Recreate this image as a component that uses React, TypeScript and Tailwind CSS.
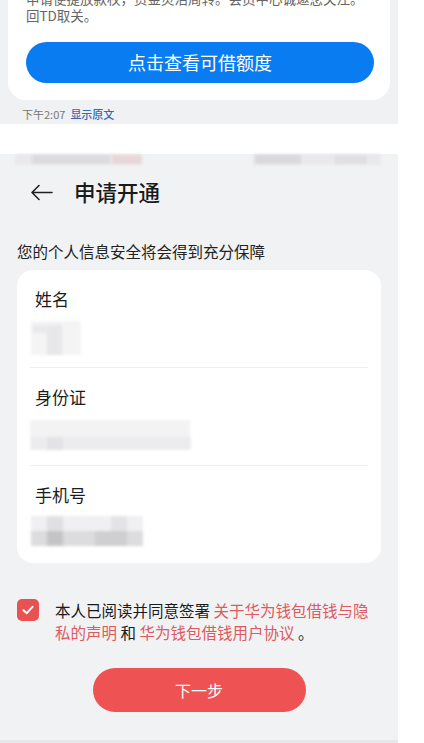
import React from "react";

function Mosaic({ blocks, className }: { blocks: { x: number; y: number; w: number; h: number; c: string }[]; className?: string }) {
  return (
    <div className={"relative " + (className ?? "")}>
      <div className="absolute inset-0 blur-[1.5px]">
        {blocks.map((b, i) => (
          <div
            key={i}
            className="absolute"
            style={{ left: b.x, top: b.y, width: b.w, height: b.h, background: b.c }}
          />
        ))}
      </div>
    </div>
  );
}

function Row({ label, mosaic, last }: { label: string; mosaic: React.ReactNode; last?: boolean }) {
  return (
    <div className="flex flex-col">
      <div className="pt-[17px] px-[18px] text-[17px] leading-[24px] text-[#1c1c1c]">{label}</div>
      <div className="h-[44px] relative">{mosaic}</div>
      <div className="h-[12px]" />
      {!last && <div className="mx-[13px] h-px bg-[#eeeff1]" />}
    </div>
  );
}

export default function App() {
  return (
    <div className="w-[424px] h-[743px] bg-white flex overflow-hidden font-['Noto_Sans_CJK_SC','Noto_Sans',sans-serif]">
      <div className="w-[398px] flex flex-col">
        {/* top chat screenshot */}
        <div className="h-[124px] bg-[#f0f1f3] px-[8px] flex flex-col">
          <div className="h-[100px] w-[382px] bg-white rounded-b-[18px] overflow-hidden flex flex-col">
            <div className="mt-[-10px] px-[18px] text-[13.5px] leading-[17px] text-[#666]">
              <div className="whitespace-nowrap">申请便捷放款权，资金灵活周转。会员中心诚邀您关注。</div>
              <div>回TD取关。</div>
            </div>
            <div className="mt-[18px] ml-[18px] mr-[16px] h-[41px] rounded-full bg-[#0a7cf2] flex items-center justify-center text-white text-[18px]">
              点击查看可借额度
            </div>
          </div>
          <div className="mt-[6px] ml-[14px] text-[11px] leading-[16px] flex gap-[5px]">
            <span className="text-[#777]">下午2:07</span>
            <span className="text-[#3a66b3] font-medium">显示原文</span>
          </div>
        </div>

        <div className="h-[30px] bg-white" />

        {/* application screen */}
        <div className="flex-1 bg-[#f1f2f4] flex flex-col">
          <Mosaic
            className="h-[12px]"
            blocks={[
              { x: 15, y: 0, w: 125, h: 11, c: "#e9e9eb" },
              { x: 32, y: 1, w: 78, h: 9, c: "#dcdcde" },
              { x: 112, y: 1, w: 30, h: 9, c: "#e8d6d8" },
              { x: 253, y: 0, w: 128, h: 11, c: "#e9e9eb" },
              { x: 255, y: 1, w: 46, h: 9, c: "#d9d9db" },
              { x: 335, y: 1, w: 32, h: 9, c: "#e0e0e2" },
            ]}
          />
          <div className="h-[52px] flex items-center">
            <svg className="ml-[30px]" width="23" height="17" viewBox="0 0 23 17" fill="none">
              <path d="M22 8.5H2 M9 1.5 L2 8.5 L9 15.5" stroke="#222" strokeWidth="1.6" strokeLinecap="round" strokeLinejoin="round" />
            </svg>
            <div className="ml-[21px] text-[21.5px] font-medium text-[#1a1a1a] leading-none">申请开通</div>
          </div>
          <div className="mt-[22px] px-[17px] text-[15.5px] leading-[22px] text-[#222]">您的个人信息安全将会得到充分保障</div>
          <div className="mt-[8px] mx-[17px] bg-white rounded-[16px] flex flex-col">
            <Row
              label="姓名"
              mosaic={
                <Mosaic
                  className="absolute inset-0"
                  blocks={[
                    { x: 14, y: 10, w: 50, h: 34, c: "#f4f4f5" },
                    { x: 30, y: 14, w: 15, h: 30, c: "#e7e7e9" },
                    { x: 15, y: 14, w: 16, h: 8, c: "#eaeaec" },
                  ]}
                />
              }
            />
            <Row
              label="身份证"
              mosaic={
                <Mosaic
                  className="absolute inset-0"
                  blocks={[
                    { x: 13, y: 11, w: 160, h: 30, c: "#f3f3f4" },
                    { x: 14, y: 28, w: 160, h: 13, c: "#ececee" },
                    { x: 30, y: 28, w: 16, h: 13, c: "#e3e3e5" },
                  ]}
                />
              }
            />
            <Row
              last
              label="手机号"
              mosaic={
                <Mosaic
                  className="absolute inset-0"
                  blocks={[
                    { x: 14, y: 9, w: 112, h: 15, c: "#f0f0f2" },
                    { x: 30, y: 9, w: 16, h: 15, c: "#e0e0e2" },
                    { x: 94, y: 9, w: 16, h: 15, c: "#e4e4e6" },
                    { x: 14, y: 24, w: 112, h: 15, c: "#dcdcde" },
                    { x: 30, y: 24, w: 16, h: 15, c: "#c4c4c6" },
                    { x: 78, y: 24, w: 32, h: 15, c: "#cfcfd1" },
                  ]}
                />
              }
            />
          </div>

          <div className="mt-[37px] pl-[17px] pr-[17px] flex items-start">
            <div className="mt-[-1px] w-[22px] h-[22px] shrink-0 rounded-[5px] bg-[#e85252] flex items-center justify-center">
              <svg width="14" height="14" viewBox="0 0 14 14" fill="none">
                <path d="M2.5 7.2 L5.8 10.2 L11.5 3.8" stroke="white" strokeWidth="2" strokeLinecap="round" strokeLinejoin="round" />
              </svg>
            </div>
            <p className="ml-[16px] text-[15.5px] leading-[21.5px] text-[#1a1a1a]">
              本人已阅读并同意签署 <span className="text-[#dc5a60]">关于华为钱包借钱与隐私的声明</span> 和 <span className="text-[#dc5a60]">华为钱包借钱用户协议</span> 。
            </p>
          </div>

          <div className="mt-[25px] flex justify-center">
            <div className="w-[213px] h-[44px] rounded-full bg-[#ef5252] flex items-center justify-center text-white text-[16px]">
              下一步
            </div>
          </div>
          <div className="flex-1" />
          <div className="h-[3px] bg-[#e6e7e9]" />
        </div>
      </div>
    </div>
  );
}
